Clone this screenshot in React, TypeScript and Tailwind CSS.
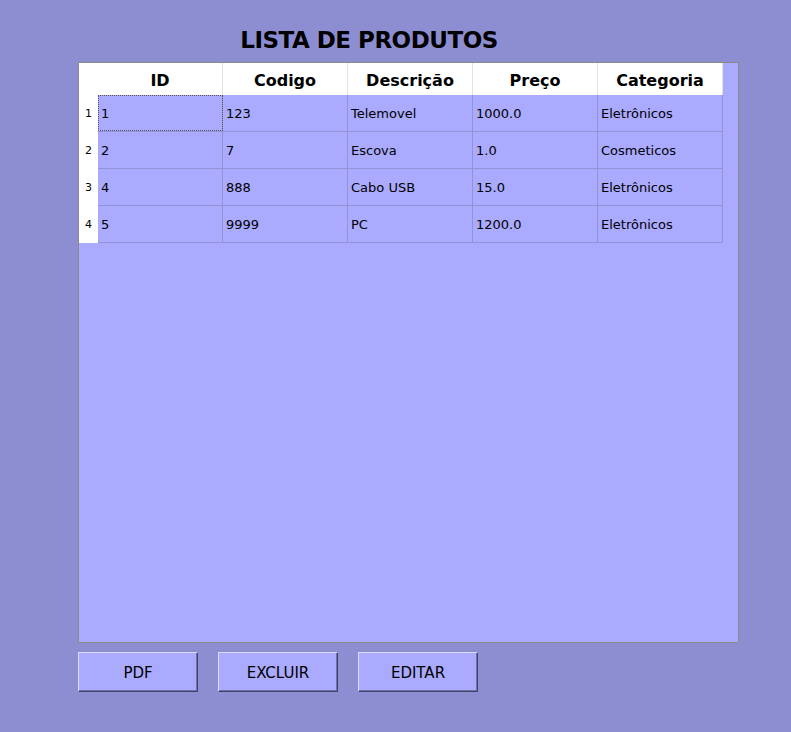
const columns = ["ID", "Codigo", "Descrição", "Preço", "Categoria"];

const rows = [
    ["1", "123", "Telemovel", "1000.0", "Eletrônicos"],
    ["2", "7", "Escova", "1.0", "Cosmeticos"],
    ["4", "888", "Cabo USB", "15.0", "Eletrônicos"],
    ["5", "9999", "PC", "1200.0", "Eletrônicos"],
];

export default function App() {
    return (
        <div className="w-[791px] h-[732px] bg-[#8d8ed1] font-['DejaVu_Sans',sans-serif] text-black pl-[78px] pt-[22px]">
            <h1 className="w-[582px] text-center text-[23px] font-bold leading-[36px] h-[40px] tracking-[-0.5px]">
                LISTA DE PRODUTOS
            </h1>

            <div className="w-[661px] h-[581px] border border-[#8a8a8a] bg-[#aaaaff]">
                <div className="flex">
                    {/* row header column */}
                    <div className="w-[19px] bg-white flex flex-col">
                        <div className="h-[32px]" />
                        {rows.map((_, i) => (
                            <div key={i} className="h-[37px] flex items-center justify-center text-[11px] pt-[2px]">
                                {i + 1}
                            </div>
                        ))}
                    </div>

                    <div className="w-[625px]">
                        <div className="flex h-[32px] bg-white">
                            {columns.map(col => (
                                <div
                                    key={col}
                                    className="w-[125px] flex items-center justify-center font-bold text-[16px] pt-[3px] border-r border-[#e2e2e2]"
                                >
                                    {col}
                                </div>
                            ))}
                        </div>
                        {rows.map((row, r) => (
                            <div key={r} className="flex h-[37px] border-b border-[#9292d6]">
                                {row.map((cell, c) => (
                                    <div
                                        key={c}
                                        className={
                                            "w-[125px] flex items-center text-[13px] pl-[3px] pt-[2px] border-r border-[#9292d6] " +
                                            (r === 0 && c === 0 ? "outline-1 outline-dotted outline-[#555] -outline-offset-1" : "")
                                        }
                                    >
                                        {cell}
                                    </div>
                                ))}
                            </div>
                        ))}
                    </div>
                </div>
            </div>

            <div className="flex gap-[20px] mt-[9px]">
                {["PDF", "EXCLUIR", "EDITAR"].map(label => (
                    <button
                        key={label}
                        className="w-[120px] h-[40px] bg-[#aaaaff] text-[15px] pt-[3px] border border-t-[#dcdcff] border-l-[#dcdcff] border-b-[#40406a] border-r-[#40406a] shadow-[inset_-1px_-1px_0_#7070a8]"
                    >
                        {label}
                    </button>
                ))}
            </div>
        </div>
    );
}
